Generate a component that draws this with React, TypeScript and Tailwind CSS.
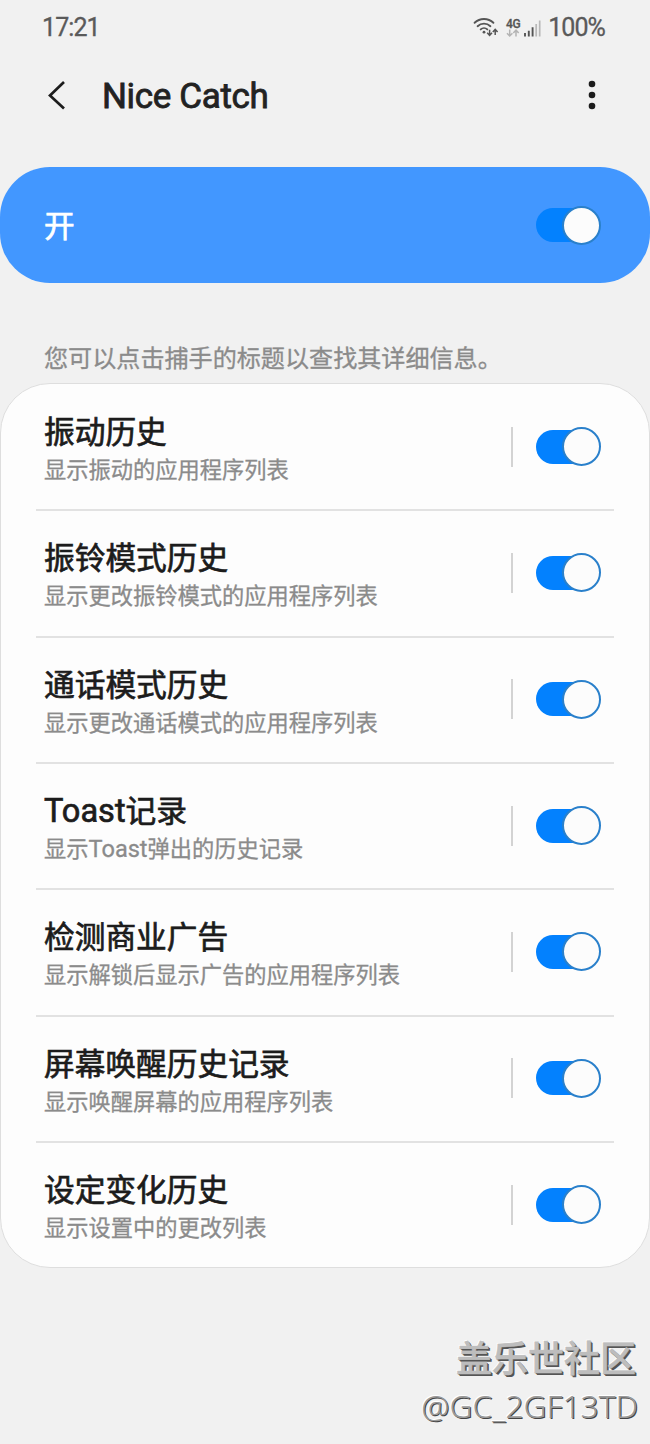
import React from 'react';

interface HistoryItem {
  title: string;
  description: string;
}

const ITEMS: HistoryItem[] = [
  { title: '振动历史', description: '显示振动的应用程序列表' },
  { title: '振铃模式历史', description: '显示更改振铃模式的应用程序列表' },
  { title: '通话模式历史', description: '显示更改通话模式的应用程序列表' },
  { title: 'Toast记录', description: '显示Toast弹出的历史记录' },
  { title: '检测商业广告', description: '显示解锁后显示广告的应用程序列表' },
  { title: '屏幕唤醒历史记录', description: '显示唤醒屏幕的应用程序列表' },
  { title: '设定变化历史', description: '显示设置中的更改列表' },
];

/** Switch in its "on" state, the knob is a bit taller than the track */
const Toggle: React.FC = () => (
  <button type="button" role="switch" aria-checked="true" className="flex h-10 w-[65px] items-center">
    <span className="flex h-[34px] w-[62px] items-center rounded-full bg-[#0381fe] pl-[26px]">
      <span className="h-[39px] w-[39px] shrink-0 rounded-full border-2 border-[#2a80cb] bg-[#fcfcfc]" />
    </span>
  </button>
);

const StatusIcons: React.FC = () => (
  <svg width="70" height="24" viewBox="472 15 70 24" fill="none" className="shrink-0">
    {/* Wi-Fi */}
    <g stroke="#555" strokeWidth="1.9" strokeLinecap="round">
      <path d="M474.6 21.8a13.6 13.6 0 0 1 18.8 0" />
      <path d="M477.6 25.2a9.2 9.2 0 0 1 12.8 0" />
      <path d="M480.7 28.4a4.8 4.8 0 0 1 6.6 0" />
    </g>
    <circle cx="484" cy="31.2" r="1.4" fill="#555" />
    <g stroke="#555" strokeWidth="1.5">
      <path d="M489.6 28.8v5M487.2 31.8l2.4 2.6 2.4-2.6" />
      <path d="M495.2 34v-5M492.8 31l2.4-2.6 2.4 2.6" />
    </g>
    {/* 4G */}
    <text x="506" y="26.6" fontSize="12" fontWeight="500" letterSpacing="-0.4" fill="#555" stroke="#555" strokeWidth="0.3" className="font-['Roboto',sans-serif]">
      4G
    </text>
    <g stroke="#b4b4b4" strokeWidth="1.5">
      <path d="M509.7 28.6v6M507 32.2l2.7 2.8 2.7-2.8" />
      <path d="M516 35.6v-6M513.3 32l2.7-2.8 2.7 2.8" />
    </g>
    {/* Signal */}
    <path d="M525 32v3.4M528.8 29.8v5.6M532.6 26.2v9.2" stroke="#555" strokeWidth="1.9" />
    <path d="M536.2 23v12.4M539.7 19.4v16" stroke="#b8b8b8" strokeWidth="1.7" />
  </svg>
);

// Latin runs are set slightly larger than the Chinese glyphs next to them
const MixedText: React.FC<{ text: string }> = ({ text }) => (
  <>
    {text.split(/([A-Za-z]+)/).map((part, index) =>
      index % 2 === 1 ? (
        <span key={index} className="text-[1.06em] leading-none">
          {part}
        </span>
      ) : (
        part
      )
    )}
  </>
);

const HistoryRow: React.FC<{ item: HistoryItem; isLast: boolean }> = ({ item, isLast }) => (
  <li className={`flex h-[126.35px] pr-[13px] pl-[8px] ${isLast ? '' : 'border-b-2 border-[#e2e2e2]'}`}>
    <div className="flex-1 pt-[28px]">
      <h2 className="h-[38px] text-[30.7px] leading-[40px] font-normal text-[#1c1c1c] [-webkit-text-stroke:0.7px_#1c1c1c]">
        <MixedText text={item.title} />
      </h2>
      <p className="mt-[2px] h-[34px] text-[22.25px] leading-[34px] text-[#8b8b8b] [-webkit-text-stroke:0.3px_#8b8b8b]">
        <MixedText text={item.description} />
      </p>
    </div>
    <div className="mt-[41.5px] flex h-10 items-center gap-[23px] self-start">
      <span className="h-10 w-[2px] bg-[#d3d3d3]" />
      <Toggle />
    </div>
  </li>
);

export default function App() {
  return (
    <div className="flex h-[1444px] w-[650px] flex-col overflow-hidden bg-[#f1f1f1] font-['Roboto','Noto_Sans_CJK_SC',sans-serif]">
      {/* Status bar */}
      <div className="flex h-[54px] items-center justify-between pt-px pr-[45px] pl-[42px] text-[25px] tracking-[-0.9px] text-[#5a5a5a] [-webkit-text-stroke:0.3px_#5a5a5a]">
        <span>17:21</span>
        <div className="flex items-center gap-[6px]">
          <StatusIcons />
          <span>100%</span>
        </div>
      </div>

      {/* App bar */}
      <header className="flex h-[84px] items-center pr-[50px] pl-[46px]">
        <svg width="22" height="32" viewBox="0 0 22 32" fill="none" className="shrink-0">
          <path d="M18 2L4 15.5l14 13" stroke="#1c1c1c" strokeWidth="2.7" />
        </svg>
        <h1 className="ml-[34px] flex-1 pt-[2px] text-[35px] font-normal tracking-[-0.35px] text-[#222] [-webkit-text-stroke:0.8px_#222]">
          Nice Catch
        </h1>
        <svg width="16" height="32" viewBox="0 0 16 32" fill="#1c1c1c">
          <circle cx="8" cy="4" r="3.3" />
          <circle cx="8" cy="15" r="3.3" />
          <circle cx="8" cy="26" r="3.3" />
        </svg>
      </header>

      {/* Main switch */}
      <div className="mt-[29px] flex h-[116px] items-center justify-between rounded-[50px] bg-[#4297ff] pr-[49px] pl-[44px]">
        <span className="pt-[4px] text-[30.6px] font-normal text-white [-webkit-text-stroke:0.7px_#fff]">开</span>
        <Toggle />
      </div>

      <p className="mt-[58px] h-[42px] pl-[44px] text-[24.1px] leading-[36px] text-[#8b8b8b] [-webkit-text-stroke:0.3px_#8b8b8b]">
        您可以点击捕手的标题以查找其详细信息。
      </p>

      <ul className="h-[885px] shrink-0 rounded-[50px] border border-[#dedede] bg-[#fdfdfd] px-[35px] pt-px">
        {ITEMS.map((item, index) => (
          <HistoryRow key={item.title} item={item} isLast={index === ITEMS.length - 1} />
        ))}
      </ul>

      {/* Watermark */}
      <footer className="mt-[68px] pr-[12px] text-right">
        <p className="mr-[2px] text-[36px] leading-[48px] font-medium text-[#bdbdbd] [-webkit-text-stroke:0.6px_#bdbdbd] [text-shadow:1px_1px_0_#555,2px_2px_0_#555,-1px_-1px_0_#fff]">
          盖乐世社区
        </p>
        <p className="font-['Noto_Sans',sans-serif] text-[31.7px] leading-[43px] font-light text-[#999] [text-shadow:1px_1px_0_#444,-1px_-1px_0_#fff]">
          @GC_2GF13TD
        </p>
      </footer>
    </div>
  );
}
